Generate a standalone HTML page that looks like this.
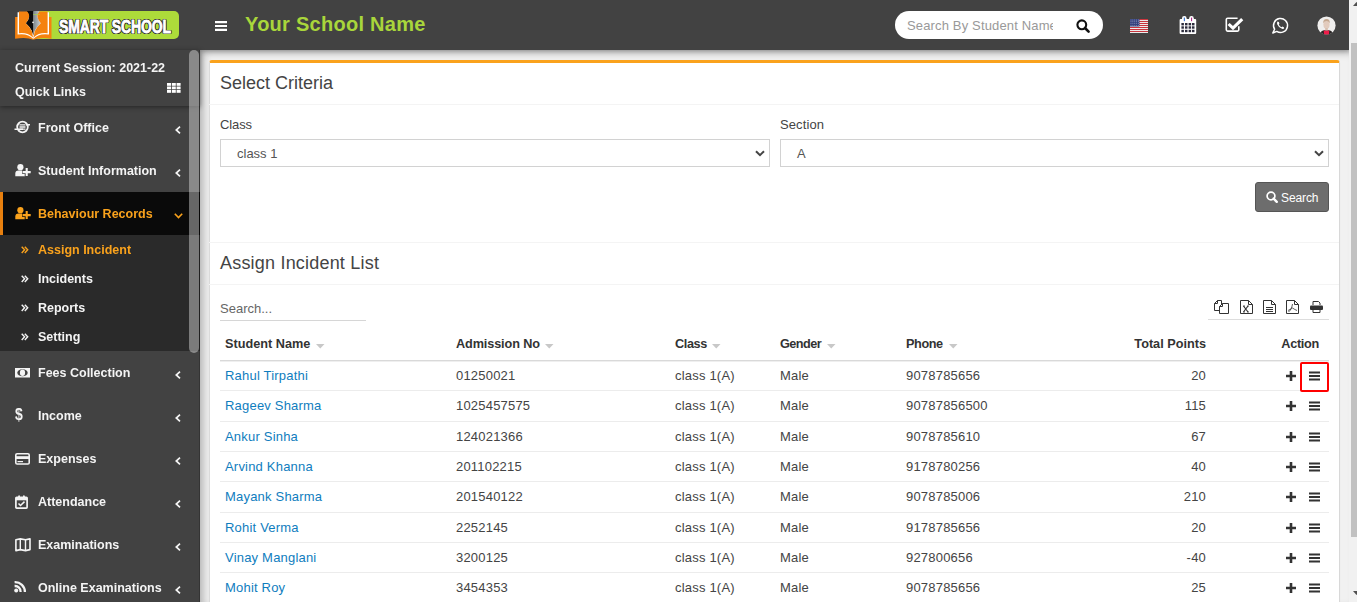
<!DOCTYPE html>
<html><head><meta charset="utf-8"><title>Assign Incident</title>
<style>
*{box-sizing:border-box}
html,body{margin:0;padding:0;width:1357px;height:602px;overflow:hidden;background:#f1f1f1;font-family:'Liberation Sans', sans-serif}
.t{position:absolute;line-height:1;white-space:nowrap}
.abs{position:absolute}
svg{position:absolute;overflow:visible}
</style></head>
<body>
<div class="abs" style="left:200px;top:50px;width:1149px;height:552px;box-shadow:inset 5px 4px 8px -2px rgba(0,0,0,.27)"></div>
<div class="abs" style="left:209px;top:60px;width:1131px;height:560px;background:#fff;border-top:3px solid #faa21c;border-right:1px solid #d8d8d8;border-left:1px solid #dadada;border-radius:3px 3px 0 0;box-shadow:0 1px 1px rgba(0,0,0,.1)"></div>
<div class="abs" style="left:209px;top:104px;width:1130px;height:1px;background:#f4f4f4"></div>
<div class="abs" style="left:209px;top:242px;width:1130px;height:1px;background:#f4f4f4"></div>
<div class="abs" style="left:209px;top:284px;width:1130px;height:1px;background:#f4f4f4"></div>
<div class="t" style="left:220px;top:74px;font-size:18px;font-weight:400;color:#444;">Select Criteria</div>
<div class="t" style="left:220px;top:118px;font-size:13px;font-weight:400;color:#444;letter-spacing:-0.1px">Class</div>
<div class="t" style="left:780px;top:118px;font-size:13px;font-weight:400;color:#444;letter-spacing:0.1px">Section</div>
<div class="abs" style="left:220px;top:139px;width:550px;height:28px;border:1px solid #d2d2d2;background:#fff"></div><div class="t" style="left:237px;top:147px;font-size:13px;font-weight:400;color:#555;">class 1</div><svg style="left:755px;top:150px" width="10" height="7"><path d="M1 1.2 L5 5.2 L9 1.2" fill="none" stroke="#444" stroke-width="2"/></svg>
<div class="abs" style="left:780px;top:139px;width:549px;height:28px;border:1px solid #d2d2d2;background:#fff"></div><div class="t" style="left:797px;top:147px;font-size:13px;font-weight:400;color:#555;">A</div><svg style="left:1314px;top:150px" width="10" height="7"><path d="M1 1.2 L5 5.2 L9 1.2" fill="none" stroke="#444" stroke-width="2"/></svg>
<div class="abs" style="left:1255px;top:182px;width:74px;height:30px;background:#6d6d6d;border:1px solid #555;border-radius:3px"></div>
<svg style="left:1266px;top:191px" width="12" height="12"><circle cx="5" cy="5" r="3.9" fill="none" stroke="#fff" stroke-width="1.7"/><path d="M7.6 7.6 L10.8 10.8" stroke="#fff" stroke-width="2.4" stroke-linecap="round"/></svg>
<div class="t" style="left:1281px;top:192px;font-size:12px;font-weight:400;color:#fff;letter-spacing:-0.1px">Search</div>
<div class="t" style="left:220px;top:254px;font-size:18px;font-weight:400;color:#444;letter-spacing:0.2px">Assign Incident List</div>
<div class="t" style="left:220px;top:302px;font-size:13px;font-weight:400;color:#666;">Search...</div>
<div class="abs" style="left:220px;top:320px;width:146px;height:1px;background:#d6d6d6"></div>
<div class="abs" style="left:1208px;top:319px;width:121px;height:1px;background:#ddd"></div>
<svg style="left:1214px;top:300px" width="15" height="14" viewBox="0 0 15 14">
<path d="M0.5 3.5 L3.5 0.5 H7.5 V4" fill="none" stroke="#333" stroke-width="1"/>
<path d="M0.5 3.5 V10.5 H5" fill="none" stroke="#333" stroke-width="1"/>
<path d="M5.5 6.5 L8.5 3.5 H14.5 V13.5 H5.5 Z" fill="none" stroke="#333" stroke-width="1"/>
<path d="M0.5 3.5 H3.5 V0.5 M5.5 6.5 H8.5 V3.5" fill="none" stroke="#333" stroke-width="1"/>
</svg>
<svg style="left:1240px;top:300px" width="13" height="14" viewBox="0 0 13 14">
<path d="M0.5 0.5 H8.5 L12.5 4.5 V13.5 H0.5 Z" fill="none" stroke="#333" stroke-width="1"/>
<path d="M8.5 0.5 V4.5 H12.5" fill="none" stroke="#333" stroke-width="1"/><path d="M3.5 6 L8 12 M8 6 L3.5 12" stroke="#333" stroke-width="1.2"/><path d="M3 6 H5 M7 6 H9 M3 12 H5 M7 12 H9" stroke="#333" stroke-width="0.8"/></svg>
<svg style="left:1263px;top:300px" width="13" height="14" viewBox="0 0 13 14">
<path d="M0.5 0.5 H8.5 L12.5 4.5 V13.5 H0.5 Z" fill="none" stroke="#333" stroke-width="1"/>
<path d="M8.5 0.5 V4.5 H12.5" fill="none" stroke="#333" stroke-width="1"/><path d="M3 7.5 H10 M3 9.5 H10 M3 11.5 H10" stroke="#333" stroke-width="1"/></svg>
<svg style="left:1286px;top:300px" width="13" height="14" viewBox="0 0 13 14">
<path d="M0.5 0.5 H8.5 L12.5 4.5 V13.5 H0.5 Z" fill="none" stroke="#333" stroke-width="1"/>
<path d="M8.5 0.5 V4.5 H12.5" fill="none" stroke="#333" stroke-width="1"/><path d="M6.5 4 C6 7 5 10 2.5 12 M6.5 8 C8 9 9.5 10 11 10.5 M6.5 8 C5 9 3 10 2 10.5" fill="none" stroke="#333" stroke-width="0.8"/></svg>
<svg style="left:1310px;top:301px" width="13" height="12" viewBox="0 0 13 12">
<path d="M3 4 V0.5 H8.5 L10 2 V4" fill="none" stroke="#333" stroke-width="1"/>
<rect x="0" y="4.5" width="13" height="4.5" rx="1" fill="#333"/>
<path d="M3 8 V11.5 H10 V8" fill="none" stroke="#333" stroke-width="1"/>
</svg>
<div class="t" style="left:225px;top:338px;font-size:12.7px;font-weight:700;color:#333;letter-spacing:0px">Student Name</div>
<div class="t" style="left:456px;top:338px;font-size:12.7px;font-weight:700;color:#333;letter-spacing:-0.12px">Admission No</div>
<div class="t" style="left:675px;top:338px;font-size:12.7px;font-weight:700;color:#333;letter-spacing:-0.4px">Class</div>
<div class="t" style="left:780px;top:338px;font-size:12.7px;font-weight:700;color:#333;letter-spacing:-0.55px">Gender</div>
<div class="t" style="left:906px;top:338px;font-size:12.7px;font-weight:700;color:#333;letter-spacing:-0.4px">Phone</div>
<svg style="left:315.6px;top:343.5px" width="9" height="5"><path d="M0 0 H8.5 L4.25 4.5 Z" fill="#c8c8c8"/></svg>
<svg style="left:545px;top:343.5px" width="9" height="5"><path d="M0 0 H8.5 L4.25 4.5 Z" fill="#c8c8c8"/></svg>
<svg style="left:712px;top:343.5px" width="9" height="5"><path d="M0 0 H8.5 L4.25 4.5 Z" fill="#c8c8c8"/></svg>
<svg style="left:827px;top:343.5px" width="9" height="5"><path d="M0 0 H8.5 L4.25 4.5 Z" fill="#c8c8c8"/></svg>
<svg style="left:948.5px;top:343.5px" width="9" height="5"><path d="M0 0 H8.5 L4.25 4.5 Z" fill="#c8c8c8"/></svg>
<div class="t" style="right:151px;top:338px;font-size:12.7px;font-weight:700;color:#333;text-align:right;">Total Points</div>
<div class="t" style="right:38px;top:338px;font-size:12.7px;font-weight:700;color:#333;text-align:right;letter-spacing:-0.3px">Action</div>
<div class="abs" style="left:220px;top:360px;width:1109px;height:1px;background:#d9d9d9"></div>
<div class="abs" style="left:220px;top:361px;width:1109px;height:1px;background:#efefef"></div>
<div class="t" style="left:225px;top:369px;font-size:13px;font-weight:400;color:#0f7dbe;letter-spacing:0.2px">Rahul Tirpathi</div>
<div class="t" style="left:456px;top:369px;font-size:13px;font-weight:400;color:#444;letter-spacing:0.2px">01250021</div>
<div class="t" style="left:675px;top:369px;font-size:13px;font-weight:400;color:#444;letter-spacing:0.2px">class 1(A)</div>
<div class="t" style="left:780px;top:369px;font-size:13px;font-weight:400;color:#444;letter-spacing:0.2px">Male</div>
<div class="t" style="left:906px;top:369px;font-size:13px;font-weight:400;color:#444;letter-spacing:0.2px">9078785656</div>
<div class="t" style="right:151px;top:369px;font-size:13px;font-weight:400;color:#444;text-align:right;letter-spacing:0.2px">20</div>
<div class="abs" style="left:220px;top:390px;width:1109px;height:1px;background:#ececec"></div>
<svg style="left:1286px;top:371px" width="10" height="10"><path d="M5 0 V10 M0 5 H10" stroke="#333" stroke-width="2.6"/></svg>
<svg style="left:1308.5px;top:371px" width="11" height="10"><path d="M0 1.5 H11 M0 5 H11 M0 8.5 H11" stroke="#333" stroke-width="2"/></svg>
<div class="t" style="left:225px;top:399px;font-size:13px;font-weight:400;color:#0f7dbe;letter-spacing:0.2px">Rageev Sharma</div>
<div class="t" style="left:456px;top:399px;font-size:13px;font-weight:400;color:#444;letter-spacing:0.2px">1025457575</div>
<div class="t" style="left:675px;top:399px;font-size:13px;font-weight:400;color:#444;letter-spacing:0.2px">class 1(A)</div>
<div class="t" style="left:780px;top:399px;font-size:13px;font-weight:400;color:#444;letter-spacing:0.2px">Male</div>
<div class="t" style="left:906px;top:399px;font-size:13px;font-weight:400;color:#444;letter-spacing:0.2px">90787856500</div>
<div class="t" style="right:151px;top:399px;font-size:13px;font-weight:400;color:#444;text-align:right;letter-spacing:0.2px">115</div>
<div class="abs" style="left:220px;top:421px;width:1109px;height:1px;background:#ececec"></div>
<svg style="left:1286px;top:401px" width="10" height="10"><path d="M5 0 V10 M0 5 H10" stroke="#333" stroke-width="2.6"/></svg>
<svg style="left:1308.5px;top:401px" width="11" height="10"><path d="M0 1.5 H11 M0 5 H11 M0 8.5 H11" stroke="#333" stroke-width="2"/></svg>
<div class="t" style="left:225px;top:430px;font-size:13px;font-weight:400;color:#0f7dbe;letter-spacing:0.2px">Ankur Sinha</div>
<div class="t" style="left:456px;top:430px;font-size:13px;font-weight:400;color:#444;letter-spacing:0.2px">124021366</div>
<div class="t" style="left:675px;top:430px;font-size:13px;font-weight:400;color:#444;letter-spacing:0.2px">class 1(A)</div>
<div class="t" style="left:780px;top:430px;font-size:13px;font-weight:400;color:#444;letter-spacing:0.2px">Male</div>
<div class="t" style="left:906px;top:430px;font-size:13px;font-weight:400;color:#444;letter-spacing:0.2px">9078785610</div>
<div class="t" style="right:151px;top:430px;font-size:13px;font-weight:400;color:#444;text-align:right;letter-spacing:0.2px">67</div>
<div class="abs" style="left:220px;top:451px;width:1109px;height:1px;background:#ececec"></div>
<svg style="left:1286px;top:432px" width="10" height="10"><path d="M5 0 V10 M0 5 H10" stroke="#333" stroke-width="2.6"/></svg>
<svg style="left:1308.5px;top:432px" width="11" height="10"><path d="M0 1.5 H11 M0 5 H11 M0 8.5 H11" stroke="#333" stroke-width="2"/></svg>
<div class="t" style="left:225px;top:460px;font-size:13px;font-weight:400;color:#0f7dbe;letter-spacing:0.2px">Arvind Khanna</div>
<div class="t" style="left:456px;top:460px;font-size:13px;font-weight:400;color:#444;letter-spacing:0.2px">201102215</div>
<div class="t" style="left:675px;top:460px;font-size:13px;font-weight:400;color:#444;letter-spacing:0.2px">class 1(A)</div>
<div class="t" style="left:780px;top:460px;font-size:13px;font-weight:400;color:#444;letter-spacing:0.2px">Male</div>
<div class="t" style="left:906px;top:460px;font-size:13px;font-weight:400;color:#444;letter-spacing:0.2px">9178780256</div>
<div class="t" style="right:151px;top:460px;font-size:13px;font-weight:400;color:#444;text-align:right;letter-spacing:0.2px">40</div>
<div class="abs" style="left:220px;top:481px;width:1109px;height:1px;background:#ececec"></div>
<svg style="left:1286px;top:462px" width="10" height="10"><path d="M5 0 V10 M0 5 H10" stroke="#333" stroke-width="2.6"/></svg>
<svg style="left:1308.5px;top:462px" width="11" height="10"><path d="M0 1.5 H11 M0 5 H11 M0 8.5 H11" stroke="#333" stroke-width="2"/></svg>
<div class="t" style="left:225px;top:490px;font-size:13px;font-weight:400;color:#0f7dbe;letter-spacing:0.2px">Mayank Sharma</div>
<div class="t" style="left:456px;top:490px;font-size:13px;font-weight:400;color:#444;letter-spacing:0.2px">201540122</div>
<div class="t" style="left:675px;top:490px;font-size:13px;font-weight:400;color:#444;letter-spacing:0.2px">class 1(A)</div>
<div class="t" style="left:780px;top:490px;font-size:13px;font-weight:400;color:#444;letter-spacing:0.2px">Male</div>
<div class="t" style="left:906px;top:490px;font-size:13px;font-weight:400;color:#444;letter-spacing:0.2px">9078785006</div>
<div class="t" style="right:151px;top:490px;font-size:13px;font-weight:400;color:#444;text-align:right;letter-spacing:0.2px">210</div>
<div class="abs" style="left:220px;top:512px;width:1109px;height:1px;background:#ececec"></div>
<svg style="left:1286px;top:492px" width="10" height="10"><path d="M5 0 V10 M0 5 H10" stroke="#333" stroke-width="2.6"/></svg>
<svg style="left:1308.5px;top:492px" width="11" height="10"><path d="M0 1.5 H11 M0 5 H11 M0 8.5 H11" stroke="#333" stroke-width="2"/></svg>
<div class="t" style="left:225px;top:521px;font-size:13px;font-weight:400;color:#0f7dbe;letter-spacing:0.2px">Rohit Verma</div>
<div class="t" style="left:456px;top:521px;font-size:13px;font-weight:400;color:#444;letter-spacing:0.2px">2252145</div>
<div class="t" style="left:675px;top:521px;font-size:13px;font-weight:400;color:#444;letter-spacing:0.2px">class 1(A)</div>
<div class="t" style="left:780px;top:521px;font-size:13px;font-weight:400;color:#444;letter-spacing:0.2px">Male</div>
<div class="t" style="left:906px;top:521px;font-size:13px;font-weight:400;color:#444;letter-spacing:0.2px">9178785656</div>
<div class="t" style="right:151px;top:521px;font-size:13px;font-weight:400;color:#444;text-align:right;letter-spacing:0.2px">20</div>
<div class="abs" style="left:220px;top:542px;width:1109px;height:1px;background:#ececec"></div>
<svg style="left:1286px;top:523px" width="10" height="10"><path d="M5 0 V10 M0 5 H10" stroke="#333" stroke-width="2.6"/></svg>
<svg style="left:1308.5px;top:523px" width="11" height="10"><path d="M0 1.5 H11 M0 5 H11 M0 8.5 H11" stroke="#333" stroke-width="2"/></svg>
<div class="t" style="left:225px;top:551px;font-size:13px;font-weight:400;color:#0f7dbe;letter-spacing:0.2px">Vinay Manglani</div>
<div class="t" style="left:456px;top:551px;font-size:13px;font-weight:400;color:#444;letter-spacing:0.2px">3200125</div>
<div class="t" style="left:675px;top:551px;font-size:13px;font-weight:400;color:#444;letter-spacing:0.2px">class 1(A)</div>
<div class="t" style="left:780px;top:551px;font-size:13px;font-weight:400;color:#444;letter-spacing:0.2px">Male</div>
<div class="t" style="left:906px;top:551px;font-size:13px;font-weight:400;color:#444;letter-spacing:0.2px">927800656</div>
<div class="t" style="right:151px;top:551px;font-size:13px;font-weight:400;color:#444;text-align:right;letter-spacing:0.2px">-40</div>
<div class="abs" style="left:220px;top:572px;width:1109px;height:1px;background:#ececec"></div>
<svg style="left:1286px;top:553px" width="10" height="10"><path d="M5 0 V10 M0 5 H10" stroke="#333" stroke-width="2.6"/></svg>
<svg style="left:1308.5px;top:553px" width="11" height="10"><path d="M0 1.5 H11 M0 5 H11 M0 8.5 H11" stroke="#333" stroke-width="2"/></svg>
<div class="t" style="left:225px;top:581px;font-size:13px;font-weight:400;color:#0f7dbe;letter-spacing:0.2px">Mohit Roy</div>
<div class="t" style="left:456px;top:581px;font-size:13px;font-weight:400;color:#444;letter-spacing:0.2px">3454353</div>
<div class="t" style="left:675px;top:581px;font-size:13px;font-weight:400;color:#444;letter-spacing:0.2px">class 1(A)</div>
<div class="t" style="left:780px;top:581px;font-size:13px;font-weight:400;color:#444;letter-spacing:0.2px">Male</div>
<div class="t" style="left:906px;top:581px;font-size:13px;font-weight:400;color:#444;letter-spacing:0.2px">9078785656</div>
<div class="t" style="right:151px;top:581px;font-size:13px;font-weight:400;color:#444;text-align:right;letter-spacing:0.2px">25</div>
<div class="abs" style="left:220px;top:602px;width:1109px;height:1px;background:#ececec"></div>
<svg style="left:1286px;top:583px" width="10" height="10"><path d="M5 0 V10 M0 5 H10" stroke="#333" stroke-width="2.6"/></svg>
<svg style="left:1308.5px;top:583px" width="11" height="10"><path d="M0 1.5 H11 M0 5 H11 M0 8.5 H11" stroke="#333" stroke-width="2"/></svg>
<div class="abs" style="left:1300px;top:362px;width:29px;height:30px;border:2px solid #f00;border-radius:2px"></div>
<div class="abs" style="left:0;top:0;width:1349px;height:50px;background:#424242;box-shadow:0 1px 5px rgba(0,0,0,.28)"></div>
<div class="abs" style="left:36px;top:11px;width:143px;height:28px;background:#addb3a;border-radius:0 5px 5px 0"></div>
<svg style="left:12px;top:8px" width="44" height="34" viewBox="0 0 44 34">
<defs><linearGradient id="nib" x1="0" x2="1" y1="0" y2="0"><stop offset="0" stop-color="#7d868a"/><stop offset="1" stop-color="#c9ced1"/></linearGradient></defs>
<path d="M3.1 9 H21.3 V31.8 Q14 28.6 3.1 30.8 Z" fill="#f5820f"/>
<path d="M39.5 9 H21.3 V31.8 Q28.6 28.6 39.5 30.8 Z" fill="#f5820f"/>
<path d="M5.6 4.2 H21.3 V31 Q16 25.2 5.6 26.6 Z" fill="#fff"/>
<path d="M37 4.2 H21.3 V31 Q26.6 25.2 37 26.6 Z" fill="#fff"/>
<path d="M15 3.1 H21.3 V27 Z" fill="#0b0b0b"/>
<path d="M15 3.1 H21.3 V27 L20 23 Q17 18 13.8 15.3 Q16.8 12 17.2 8.5 Q16.8 5.5 15 3.1 Z" fill="#0b0b0b"/>
<path d="M27.6 3.1 H21.3 V27 L22.6 23 Q25.6 18 28.8 15.3 Q25.8 12 25.4 8.5 Q25.8 5.5 27.6 3.1 Z" fill="url(#nib)"/>
<path d="M7 3.6 H15.2 Q17.4 5.8 17.2 8.5 Q16.8 12 13.8 15.3 Q17.5 18.5 20 23.5 L21 29.5 Q15.5 24.2 7 25.2 Z" fill="#f5820f"/>
<path d="M35.6 3.6 H27.4 Q25.2 5.8 25.4 8.5 Q25.8 12 28.8 15.3 Q25.1 18.5 22.6 23.5 L21.6 29.5 Q27.1 24.2 35.6 25.2 Z" fill="#f5820f"/>
<path d="M21.3 6.5 H28" stroke="#addb3a" stroke-width="0.6"/>
<circle cx="21" cy="14.4" r="0.8" fill="#fff"/>
</svg>
<div class="t" style="left:59px;top:17.2px;font-size:20px;font-weight:700;color:#fff;transform:scale(0.70,0.94);transform-origin:0 0;letter-spacing:-0.2px;-webkit-text-stroke:0.9px #fff;text-shadow:1px 1px 0 #222,-1px -1px 0 #222,1px -1px 0 #222,-1px 1px 0 #222,0 1.4px 0 #222,1.4px 0 0 #222,0 -1.4px 0 #222,-1.4px 0 0 #222">SMART SCHOOL</div>
<svg style="left:214.5px;top:21px" width="12" height="10"><path d="M0 1.2 H12 M0 5 H12 M0 8.8 H12" stroke="#fff" stroke-width="2.2"/></svg>
<div class="t" style="left:245px;top:14px;font-size:20px;font-weight:700;color:#a9d63b;letter-spacing:0.27px">Your School Name</div>
<div class="abs" style="left:895px;top:11px;width:208px;height:28px;background:#fff;border-radius:14px"></div>
<div class="abs" style="left:907px;top:11px;width:146px;height:28px;overflow:hidden"><div class="t" style="left:0px;top:8px;font-size:13px;font-weight:400;color:#999;letter-spacing:0.15px">Search By Student Name</div></div>
<svg style="left:1076px;top:19px" width="15" height="14"><circle cx="5.8" cy="5.8" r="4.4" fill="none" stroke="#111" stroke-width="2.1"/><path d="M9 9 L12.6 12.6" stroke="#111" stroke-width="2.6" stroke-linecap="round"/></svg>
<svg style="left:1130px;top:19px" width="18" height="14" viewBox="0 0 18 14"><rect x="0" y="0" width="18" height="1.1" fill="#c8363e"/><rect x="0" y="1.1" width="18" height="0.9" fill="#fff"/><rect x="0" y="2" width="18" height="1.1" fill="#c8363e"/><rect x="0" y="3.1" width="18" height="0.9" fill="#fff"/><rect x="0" y="4" width="18" height="1.1" fill="#c8363e"/><rect x="0" y="5.1" width="18" height="0.9" fill="#fff"/><rect x="0" y="6" width="18" height="1.1" fill="#c8363e"/><rect x="0" y="7.1" width="18" height="0.9" fill="#fff"/><rect x="0" y="8" width="18" height="1.1" fill="#c8363e"/><rect x="0" y="9.1" width="18" height="0.9" fill="#fff"/><rect x="0" y="10" width="18" height="1.1" fill="#c8363e"/><rect x="0" y="11.1" width="18" height="0.9" fill="#fff"/><rect x="0" y="12" width="18" height="1.1" fill="#c8363e"/><rect x="0" y="13.1" width="18" height="0.9" fill="#fff"/><rect x="0" y="0" width="9.5" height="7.5" fill="#34427e"/><circle cx="1.0" cy="1.0" r="0.45" fill="#c8cce0"/><circle cx="2.9" cy="1.0" r="0.45" fill="#c8cce0"/><circle cx="4.8" cy="1.0" r="0.45" fill="#c8cce0"/><circle cx="6.699999999999999" cy="1.0" r="0.45" fill="#c8cce0"/><circle cx="8.6" cy="1.0" r="0.45" fill="#c8cce0"/><circle cx="1.0" cy="2.8" r="0.45" fill="#c8cce0"/><circle cx="2.9" cy="2.8" r="0.45" fill="#c8cce0"/><circle cx="4.8" cy="2.8" r="0.45" fill="#c8cce0"/><circle cx="6.699999999999999" cy="2.8" r="0.45" fill="#c8cce0"/><circle cx="8.6" cy="2.8" r="0.45" fill="#c8cce0"/><circle cx="1.0" cy="4.6" r="0.45" fill="#c8cce0"/><circle cx="2.9" cy="4.6" r="0.45" fill="#c8cce0"/><circle cx="4.8" cy="4.6" r="0.45" fill="#c8cce0"/><circle cx="6.699999999999999" cy="4.6" r="0.45" fill="#c8cce0"/><circle cx="8.6" cy="4.6" r="0.45" fill="#c8cce0"/><circle cx="1.0" cy="6.4" r="0.45" fill="#c8cce0"/><circle cx="2.9" cy="6.4" r="0.45" fill="#c8cce0"/><circle cx="4.8" cy="6.4" r="0.45" fill="#c8cce0"/><circle cx="6.699999999999999" cy="6.4" r="0.45" fill="#c8cce0"/><circle cx="8.6" cy="6.4" r="0.45" fill="#c8cce0"/></svg>
<svg style="left:1179px;top:16px" width="18" height="18" viewBox="0 0 18 18"><rect x="0.6" y="3" width="16.6" height="15" rx="1" fill="#fff"/><rect x="3" y="0" width="4.6" height="6" rx="2.2" fill="#fff"/><rect x="10.2" y="0" width="4.6" height="6" rx="2.2" fill="#fff"/><rect x="4.8" y="1.6" width="1.1" height="3.6" fill="#2f6fd0"/><rect x="12" y="1.6" width="1.1" height="3.6" fill="#b02a8a"/><rect x="2.4" y="7.0" width="2.5" height="2.4" fill="#2c2c3c"/><rect x="6.0" y="7.0" width="2.5" height="2.4" fill="#2c2c3c"/><rect x="9.6" y="7.0" width="2.5" height="2.4" fill="#2c2c3c"/><rect x="13.0" y="7.0" width="2.5" height="2.4" fill="#2c2c3c"/><rect x="2.4" y="10.3" width="2.5" height="2.4" fill="#2c2c3c"/><rect x="6.0" y="10.3" width="2.5" height="2.4" fill="#2c2c3c"/><rect x="9.6" y="10.3" width="2.5" height="2.4" fill="#2c2c3c"/><rect x="13.0" y="10.3" width="2.5" height="2.4" fill="#2c2c3c"/><rect x="2.4" y="13.8" width="2.5" height="2.4" fill="#2c2c3c"/><rect x="6.0" y="13.8" width="2.5" height="2.4" fill="#2c2c3c"/><rect x="9.6" y="13.8" width="2.5" height="2.4" fill="#2c2c3c"/><rect x="13.0" y="13.8" width="2.5" height="2.4" fill="#2c2c3c"/></svg>
<svg style="left:1225px;top:17px" width="19" height="16" viewBox="0 0 19 16">
<path d="M12.6 1.3 H2.6 Q1.3 1.3 1.3 2.6 V12.8 Q1.3 14.1 2.6 14.1 H12.5 Q13.8 14.1 13.8 12.8 V9.2" fill="none" stroke="#fff" stroke-width="1.6"/>
<path d="M3.6 7 L8 11.2 L17.2 2.2" fill="none" stroke="#fff" stroke-width="3.1"/>
</svg>
<svg style="left:1272px;top:17px" width="17" height="17" viewBox="0 0 17 17">
<path d="M2.6 12.2 A7 7 0 1 1 4.8 14.4 L0.8 16 Z" fill="none" stroke="#fff" stroke-width="1.5" stroke-linejoin="round"/>
<path d="M5.6 4.6 Q4.6 5.6 5.2 7.2 Q6.6 10.6 10 11.8 Q11.6 12.2 12.2 11.2 L11.8 10.2 L10.4 9.6 L9.6 10.2 Q7.6 9.4 6.8 7.4 L7.4 6.6 L6.8 5 Z" fill="#fff"/>
</svg>
<svg style="left:1316.5px;top:15.6px" width="19" height="19" viewBox="0 0 19 19">
<defs><clipPath id="av"><circle cx="9.5" cy="9.5" r="9.1"/></clipPath></defs>
<g clip-path="url(#av)">
<rect width="19" height="19" fill="#efeeed"/>
<path d="M2 19 Q3.5 15 7 14.2 H12 Q15.5 15 17 19 Z" fill="#2a2626"/>
<path d="M6.8 14.6 H12.2 L12 19 H7 Z" fill="#ee1c4a"/>
<ellipse cx="9.5" cy="8.6" rx="3.1" ry="4.3" fill="#e2cbbd"/>
<path d="M6.2 7.2 Q6.1 3.2 9.5 3.1 Q12.9 3.2 12.8 7.2 Q11.8 5.1 9.5 5.1 Q7.2 5.1 6.2 7.2 Z" fill="#c4a78f"/>
<rect x="8.2" y="12" width="2.6" height="2.4" fill="#d8bfae"/>
</g></svg>
<div class="abs" style="left:0;top:50px;width:200px;height:552px;background:#424242"></div>
<div class="abs" style="left:0;top:192px;width:189px;height:43px;background:#0a0a0a;border-left:3px solid #e8800f"></div>
<div class="abs" style="left:189px;top:192px;width:11px;height:43px;background:#0a0a0a"></div>
<div class="abs" style="left:0;top:235px;width:200px;height:116px;background:#2a2a2a"></div>
<div class="abs" style="left:0;top:50px;width:200px;height:56px;background:#424242;box-shadow:0 1px 5px rgba(0,0,0,.45)"></div>
<div class="abs" style="left:0;top:0;width:200px;height:602px;will-change:transform">
<div class="t" style="left:15px;top:62px;font-size:12.5px;font-weight:700;color:#f4f4f4;">Current Session: 2021-22</div>
<div class="t" style="left:15px;top:86px;font-size:12.5px;font-weight:700;color:#f4f4f4;">Quick Links</div>
<svg style="left:166.5px;top:83px" width="14" height="10"><rect x="0.0" y="0.0" width="4" height="2.8" fill="#fff"/><rect x="4.8" y="0.0" width="4" height="2.8" fill="#fff"/><rect x="9.6" y="0.0" width="4" height="2.8" fill="#fff"/><rect x="0.0" y="3.5" width="4" height="2.8" fill="#fff"/><rect x="4.8" y="3.5" width="4" height="2.8" fill="#fff"/><rect x="9.6" y="3.5" width="4" height="2.8" fill="#fff"/><rect x="0.0" y="7.0" width="4" height="2.8" fill="#fff"/><rect x="4.8" y="7.0" width="4" height="2.8" fill="#fff"/><rect x="9.6" y="7.0" width="4" height="2.8" fill="#fff"/></svg>
<div class="t" style="left:38px;top:122px;font-size:12.5px;font-weight:700;color:#f4f4f4;">Front Office</div>
<svg style="left:175px;top:126px" width="6" height="8"><path d="M5 0.7 L1.3 4 L5 7.3" fill="none" stroke="#f4f4f4" stroke-width="1.7"/></svg>
<div class="t" style="left:38px;top:165px;font-size:12.5px;font-weight:700;color:#f4f4f4;">Student Information</div>
<svg style="left:175px;top:169px" width="6" height="8"><path d="M5 0.7 L1.3 4 L5 7.3" fill="none" stroke="#f4f4f4" stroke-width="1.7"/></svg>
<div class="t" style="left:38px;top:208px;font-size:12.5px;font-weight:700;color:#faa21c;">Behaviour Records</div>
<svg style="left:174px;top:213px" width="9" height="6"><path d="M0.8 0.8 L4.5 4.5 L8.2 0.8" fill="none" stroke="#faa21c" stroke-width="1.6"/></svg>
<div class="t" style="left:38px;top:367px;font-size:12.5px;font-weight:700;color:#f4f4f4;">Fees Collection</div>
<svg style="left:175px;top:371px" width="6" height="8"><path d="M5 0.7 L1.3 4 L5 7.3" fill="none" stroke="#f4f4f4" stroke-width="1.7"/></svg>
<div class="t" style="left:38px;top:410px;font-size:12.5px;font-weight:700;color:#f4f4f4;">Income</div>
<svg style="left:175px;top:414px" width="6" height="8"><path d="M5 0.7 L1.3 4 L5 7.3" fill="none" stroke="#f4f4f4" stroke-width="1.7"/></svg>
<div class="t" style="left:38px;top:453px;font-size:12.5px;font-weight:700;color:#f4f4f4;">Expenses</div>
<svg style="left:175px;top:457px" width="6" height="8"><path d="M5 0.7 L1.3 4 L5 7.3" fill="none" stroke="#f4f4f4" stroke-width="1.7"/></svg>
<div class="t" style="left:38px;top:496px;font-size:12.5px;font-weight:700;color:#f4f4f4;">Attendance</div>
<svg style="left:175px;top:500px" width="6" height="8"><path d="M5 0.7 L1.3 4 L5 7.3" fill="none" stroke="#f4f4f4" stroke-width="1.7"/></svg>
<div class="t" style="left:38px;top:539px;font-size:12.5px;font-weight:700;color:#f4f4f4;">Examinations</div>
<svg style="left:175px;top:543px" width="6" height="8"><path d="M5 0.7 L1.3 4 L5 7.3" fill="none" stroke="#f4f4f4" stroke-width="1.7"/></svg>
<div class="t" style="left:38px;top:582px;font-size:12.5px;font-weight:700;color:#f4f4f4;">Online Examinations</div>
<svg style="left:175px;top:586px" width="6" height="8"><path d="M5 0.7 L1.3 4 L5 7.3" fill="none" stroke="#f4f4f4" stroke-width="1.7"/></svg>
<div class="t" style="left:38px;top:244px;font-size:12.5px;font-weight:700;color:#faa21c;letter-spacing:0.0px">Assign Incident</div>
<svg style="left:21px;top:246px" width="8" height="8"><path d="M0.7 0.7 L3.6 3.8 L0.7 6.9 M3.8 0.7 L6.7 3.8 L3.8 6.9" fill="none" stroke="#faa21c" stroke-width="1.4"/></svg>
<div class="t" style="left:38px;top:273px;font-size:12.5px;font-weight:700;color:#f4f4f4;letter-spacing:0.0px">Incidents</div>
<svg style="left:21px;top:275px" width="8" height="8"><path d="M0.7 0.7 L3.6 3.8 L0.7 6.9 M3.8 0.7 L6.7 3.8 L3.8 6.9" fill="none" stroke="#f4f4f4" stroke-width="1.4"/></svg>
<div class="t" style="left:38px;top:302px;font-size:12.5px;font-weight:700;color:#f4f4f4;letter-spacing:0.0px">Reports</div>
<svg style="left:21px;top:304px" width="8" height="8"><path d="M0.7 0.7 L3.6 3.8 L0.7 6.9 M3.8 0.7 L6.7 3.8 L3.8 6.9" fill="none" stroke="#f4f4f4" stroke-width="1.4"/></svg>
<div class="t" style="left:38px;top:331px;font-size:12.5px;font-weight:700;color:#f4f4f4;letter-spacing:0.0px">Setting</div>
<svg style="left:21px;top:333px" width="8" height="8"><path d="M0.7 0.7 L3.6 3.8 L0.7 6.9 M3.8 0.7 L6.7 3.8 L3.8 6.9" fill="none" stroke="#f4f4f4" stroke-width="1.4"/></svg>
<svg style="left:14px;top:120px" width="17" height="14" viewBox="0 0 17 14">
<circle cx="8.5" cy="7" r="5.3" fill="none" stroke="#f4f4f4" stroke-width="1.8"/>
<path d="M5.5 4.8 H11.5 M5.5 7 H11.5 M5.5 9.2 H11.5" stroke="#f4f4f4" stroke-width="1.3"/>
<path d="M0.5 9.3 H9 M12 4.7 H16" stroke="#f4f4f4" stroke-width="1.4"/>
</svg>
<svg style="left:14.5px;top:164px" width="17" height="13" viewBox="0 0 17 13">
<circle cx="5.4" cy="3.2" r="3.1" fill="#f4f4f4"/>
<path d="M0.3 12.3 V9.8 Q0.3 6.6 3.4 6.6 H7.4 Q10.2 6.6 10.2 9.5 V12.3 Z" fill="#f4f4f4"/>
<path d="M11.7 3.6 V12.6 M7.2 8.1 H16.2" stroke="#424242" stroke-width="4"/>
<path d="M11.7 4.1 V12.1 M7.7 8.1 H15.7" stroke="#f4f4f4" stroke-width="2.1"/>
</svg>
<svg style="left:14.5px;top:207px" width="17" height="13" viewBox="0 0 17 13">
<circle cx="5.4" cy="3.2" r="3.1" fill="#faa21c"/>
<path d="M0.3 12.3 V9.8 Q0.3 6.6 3.4 6.6 H7.4 Q10.2 6.6 10.2 9.5 V12.3 Z" fill="#faa21c"/>
<path d="M11.7 3.6 V12.6 M7.2 8.1 H16.2" stroke="#0a0a0a" stroke-width="4"/>
<path d="M11.7 4.1 V12.1 M7.7 8.1 H15.7" stroke="#faa21c" stroke-width="2.1"/>
</svg>
<svg style="left:14.5px;top:367.5px" width="15" height="10" viewBox="0 0 15 10">
<rect x="0" y="0" width="15" height="9.5" fill="#f4f4f4"/>
<ellipse cx="7.5" cy="4.75" rx="5.2" ry="3.6" fill="#424242"/>
<ellipse cx="7.5" cy="4.75" rx="2.6" ry="3.2" fill="#f4f4f4"/>
</svg>
<div class="t" style="left:14.6px;top:406px;font-size:17px;font-weight:700;color:#f4f4f4;transform:scaleX(0.82);transform-origin:0 0">$</div>
<svg style="left:14.5px;top:452.5px" width="15" height="12" viewBox="0 0 15 12">
<rect x="0.8" y="0.8" width="13.4" height="10.2" rx="1.3" fill="none" stroke="#f4f4f4" stroke-width="1.6"/>
<rect x="0.8" y="3.2" width="13.4" height="2.8" fill="#f4f4f4"/>
<rect x="2.5" y="8" width="5.5" height="1.2" fill="#f4f4f4"/>
</svg>
<svg style="left:14.5px;top:494.5px" width="13" height="14" viewBox="0 0 13 14">
<rect x="0.9" y="2.3" width="11.2" height="10.8" rx="0.8" fill="none" stroke="#f4f4f4" stroke-width="1.7"/>
<rect x="0.9" y="2.3" width="11.2" height="3" fill="#f4f4f4"/>
<rect x="3.2" y="0.3" width="1.8" height="3.5" rx="0.9" fill="#f4f4f4"/>
<rect x="8" y="0.3" width="1.8" height="3.5" rx="0.9" fill="#f4f4f4"/>
<path d="M3.5 8.5 L5.5 10.5 L9.5 6.6" fill="none" stroke="#f4f4f4" stroke-width="1.5"/>
</svg>
<svg style="left:14.5px;top:537.5px" width="16" height="14" viewBox="0 0 16 14">
<path d="M0.9 1.8 L5.3 0.9 L10.5 1.8 L15 0.9 V11.6 L10.5 12.6 L5.3 11.6 L0.9 12.6 Z" fill="none" stroke="#f4f4f4" stroke-width="1.6" stroke-linejoin="round"/>
<path d="M5.3 1 V11.6 M10.5 1.8 V12.5" stroke="#f4f4f4" stroke-width="1.4"/>
</svg>
<svg style="left:14px;top:581px" width="13" height="12" viewBox="0 0 13 12">
<circle cx="2.2" cy="9.4" r="2" fill="#f4f4f4"/>
<path d="M0.6 5 A5.6 5.6 0 0 1 6.6 11" fill="none" stroke="#f4f4f4" stroke-width="2.3"/>
<path d="M0.6 1.1 A9.8 9.8 0 0 1 10.9 11" fill="none" stroke="#f4f4f4" stroke-width="2.3"/>
</svg>
</div>
<div class="abs" style="left:199px;top:50px;width:1px;height:552px;background:rgba(0,0,0,.2)"></div>
<div class="abs" style="left:189px;top:50px;width:10px;height:303px;background:rgba(255,255,255,.38);border-radius:5px"></div>
<div class="abs" style="left:1349px;top:0;width:8px;height:602px;background:#f1f1f1"></div>
<div class="abs" style="left:1351px;top:43px;width:8px;height:494px;background:#c1c1c1"></div>
<svg style="left:1353px;top:2px" width="8" height="5"><path d="M3.5 0 L7 4 H0 Z" fill="#505050"/></svg>
<svg style="left:1353px;top:591px" width="8" height="5"><path d="M0 0 H7 L3.5 4 Z" fill="#505050"/></svg>
</body></html>
